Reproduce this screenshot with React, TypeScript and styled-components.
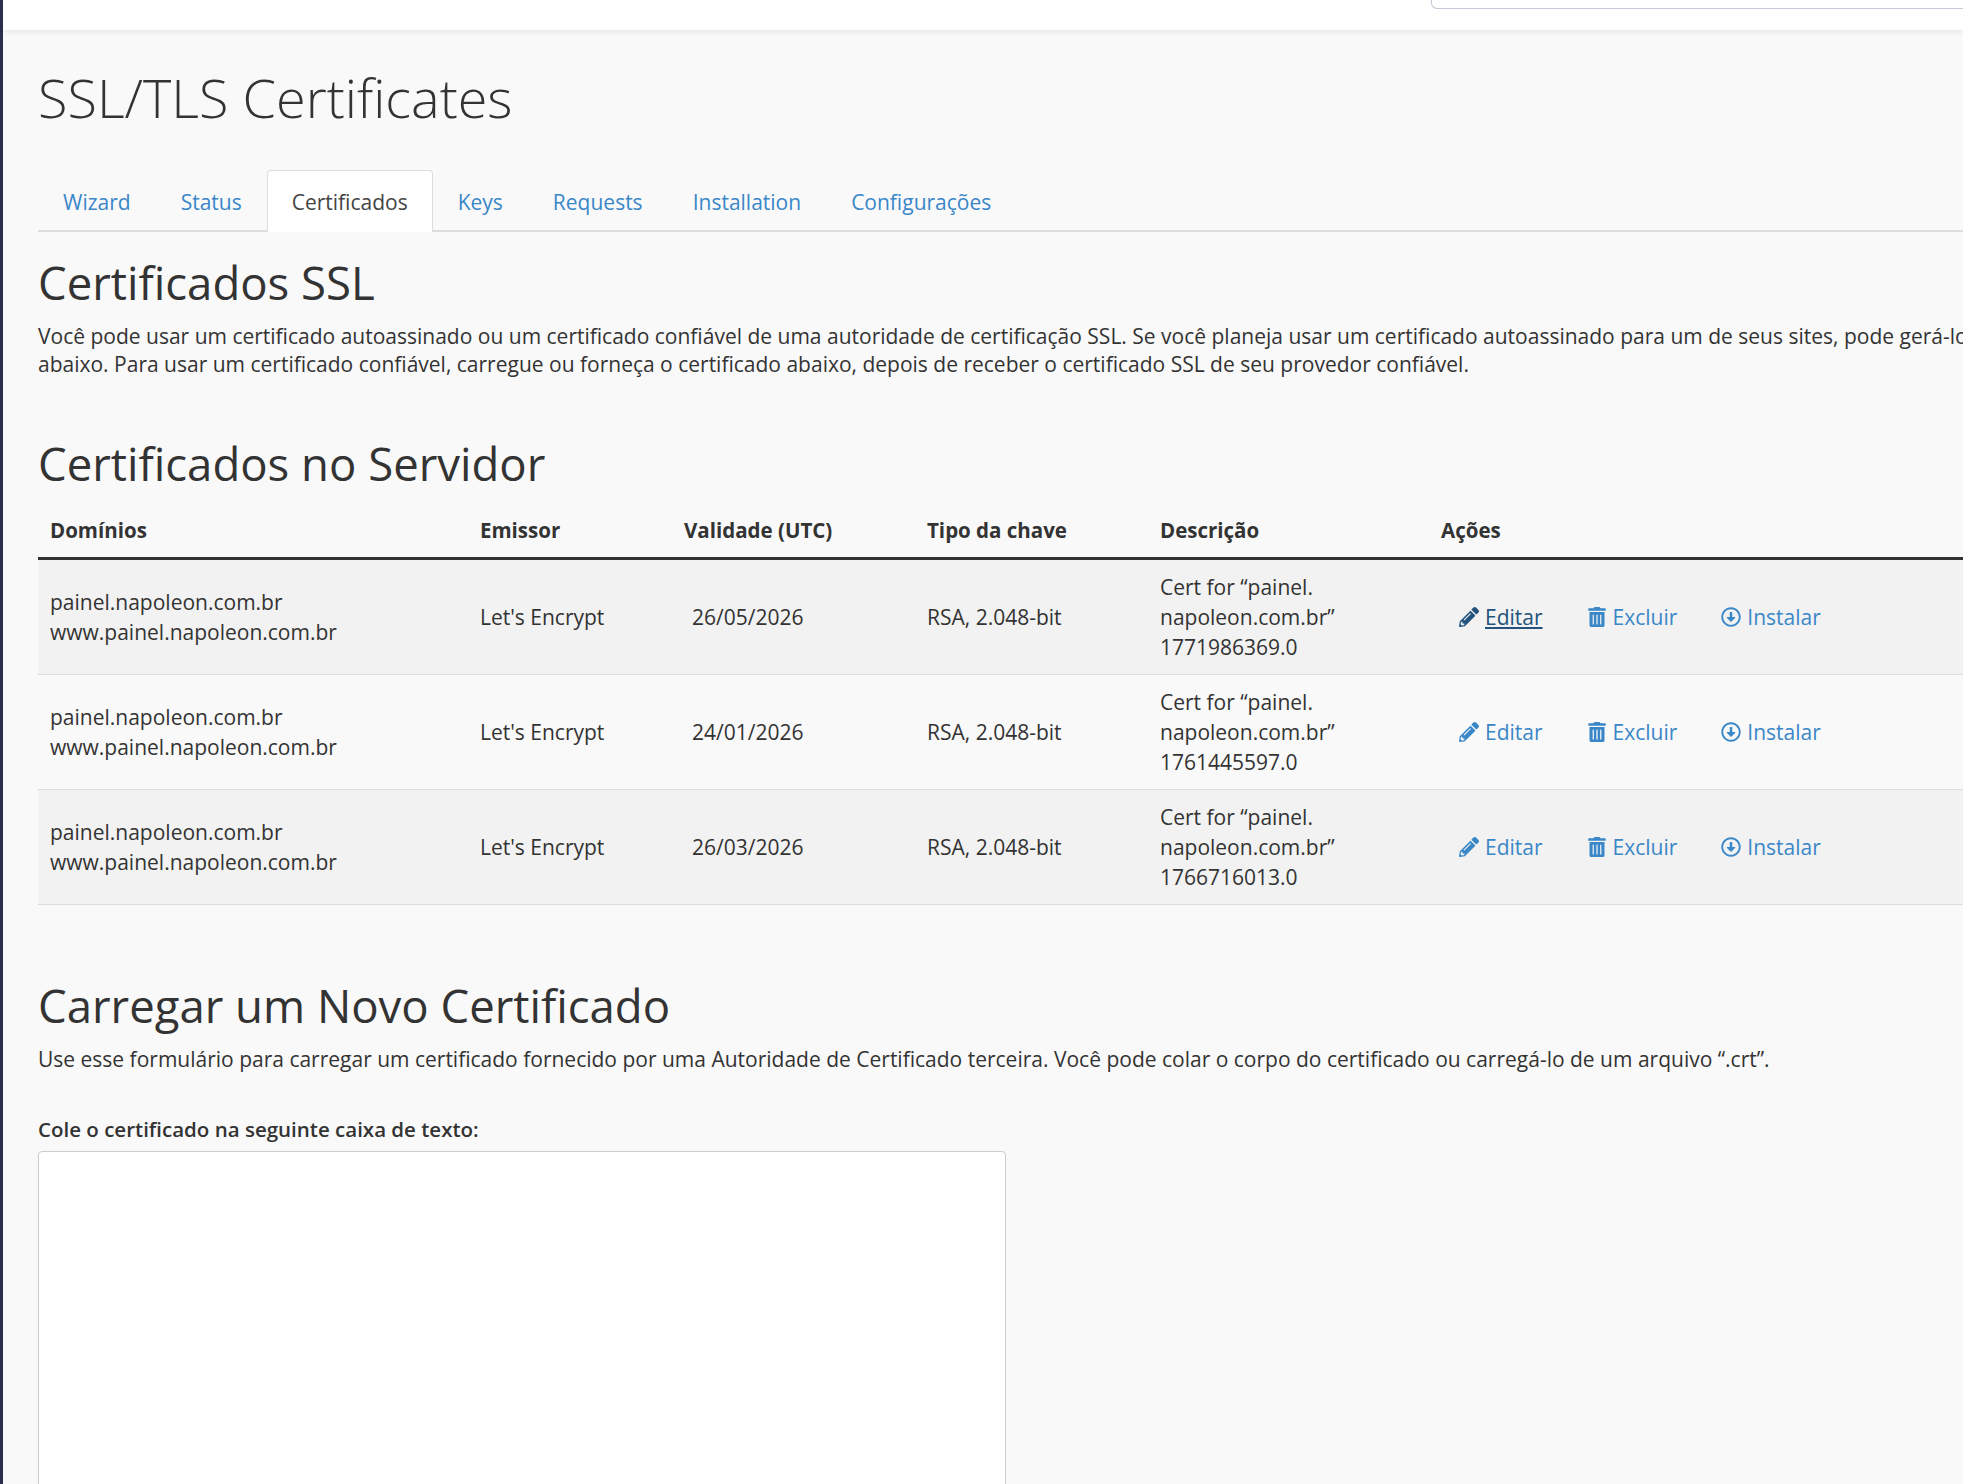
import React from 'react';
import styled, { createGlobalStyle } from 'styled-components';
import { FaPencilAlt, FaTrashAlt, FaRegArrowAltCircleDown } from 'react-icons/fa';

const GlobalStyle = createGlobalStyle`
  html, body {
    margin: 0;
    padding: 0;
    background: #f9f9f9;
    overflow: hidden;
    font-family: 'Open Sans', 'Noto Sans', sans-serif;
    color: #333;
  }
`;

const Shell = styled.div`
  width: 1963px;
  height: 1484px;
  border-left: 3px solid #2b2f4d;
  box-sizing: border-box;
  overflow: hidden;
`;

const TopBar = styled.div`
  height: 30px;
  background: #fff;
  box-shadow: 0 2px 6px rgba(0, 0, 0, 0.08);
  display: flex;
  justify-content: flex-end;
`;

const SearchBox = styled.div`
  width: 560px;
  height: 8px;
  margin-right: -30px;
  border: 1px solid #c8c8d8;
  border-top: none;
  border-radius: 0 0 0 6px;
`;

const Content = styled.div`
  padding: 0 0 0 35px;
  width: 2100px;
`;

const Title = styled.h1`
  font-size: 54px;
  font-weight: 300;
  margin: 28px 0 34px;
  line-height: 78px;
`;

const Tabs = styled.div`
  display: flex;
  border-bottom: 2px solid #ddd;
  height: 60px;
`;

const Tab = styled.div<{ $active?: boolean }>`
  font-size: 21px;
  padding: 0 24px;
  display: flex;
  align-items: center;
  color: ${(p) => (p.$active ? '#444' : '#3a87c8')};
  background: ${(p) => (p.$active ? '#fff' : 'transparent')};
  border: 1px solid ${(p) => (p.$active ? '#ddd' : 'transparent')};
  border-bottom: none;
  border-radius: 4px 4px 0 0;
  margin-bottom: -2px;
`;

const H2 = styled.h2<{ $top: number }>`
  font-size: 45.5px;
  font-weight: 500;
  margin: ${(p) => p.$top}px 0 10px;
  line-height: 60px;
`;

const Para = styled.p`
  font-size: 21px;
  line-height: 28px;
  margin: 0;
  white-space: nowrap;
`;

const Table = styled.div`
  margin-top: 2px;
  width: 2100px;
`;

const grid = `display: grid; grid-template-columns: 430px 204px 243px 233px 281px 1fr;`;

const HeadRow = styled.div`
  ${grid}
  height: 54px;
  align-items: center;
  border-bottom: 3px solid #333;
  font-weight: 700;
  font-size: 20.5px;
  padding-left: 12px;
`;

const Row = styled.div<{ $odd: boolean }>`
  ${grid}
  height: 114px;
  align-items: center;
  background: ${(p) => (p.$odd ? '#f2f2f2' : '#f9f9f9')};
  border-bottom: 1px solid #ddd;
  font-size: 21px;
  line-height: 30px;
  padding-left: 12px;
`;

const Cell = styled.div<{ $shift?: number }>`
  padding-left: ${(p) => p.$shift || 0}px;
`;

const Actions = styled.div`
  display: flex;
  gap: 44px;
  padding-left: 18px;
`;

const Action = styled.a<{ $hover?: boolean }>`
  display: flex;
  align-items: center;
  gap: 6px;
  color: ${(p) => (p.$hover ? '#23527c' : '#3a87c8')};
  font-size: 21px;
  span {
    text-decoration: ${(p) => (p.$hover ? 'underline' : 'none')};
  }
  svg {
    font-size: 20px;
  }
`;

const Label = styled.div`
  font-weight: 600;
  font-size: 20.5px;
  margin-top: 42px;
  margin-bottom: 8px;
`;

const TextArea = styled.div`
  width: 966px;
  height: 400px;
  background: #fff;
  border: 1px solid #ccc;
  border-radius: 4px;
`;

const rows = [
  { date: '26/05/2026', id: '1771986369.0' },
  { date: '24/01/2026', id: '1761445597.0' },
  { date: '26/03/2026', id: '1766716013.0' },
];

export default function App() {
  return (
    <>
      <GlobalStyle />
      <Shell>
        <TopBar>
          <SearchBox />
        </TopBar>
        <Content>
          <Title>SSL/TLS Certificates</Title>
          <Tabs>
            <Tab>Wizard</Tab>
            <Tab>Status</Tab>
            <Tab $active>Certificados</Tab>
            <Tab>Keys</Tab>
            <Tab>Requests</Tab>
            <Tab>Installation</Tab>
            <Tab>Configurações</Tab>
          </Tabs>
          <H2 $top={20}>Certificados SSL</H2>
          <Para>
            Você pode usar um certificado autoassinado ou um certificado confiável de uma autoridade de certificação SSL. Se você planeja usar um certificado autoassinado para um de seus sites, pode gerá-lo
            <br />
            abaixo. Para usar um certificado confiável, carregue ou forneça o certificado abaixo, depois de receber o certificado SSL de seu provedor confiável.
          </Para>
          <H2 $top={55}>Certificados no Servidor</H2>
          <Table>
            <HeadRow>
              <Cell>Domínios</Cell>
              <Cell>Emissor</Cell>
              <Cell>Validade (UTC)</Cell>
              <Cell>Tipo da chave</Cell>
              <Cell>Descrição</Cell>
              <Cell>Ações</Cell>
            </HeadRow>
            {rows.map((r, i) => (
              <Row key={r.id} $odd={i % 2 === 0}>
                <Cell>
                  painel.napoleon.com.br
                  <br />
                  www.painel.napoleon.com.br
                </Cell>
                <Cell>Let's Encrypt</Cell>
                <Cell $shift={8}>{r.date}</Cell>
                <Cell>RSA, 2.048-bit</Cell>
                <Cell>
                  Cert for “painel.
                  <br />
                  napoleon.com.br”
                  <br />
                  {r.id}
                </Cell>
                <Actions>
                  <Action $hover={i === 0}>
                    <FaPencilAlt />
                    <span>Editar</span>
                  </Action>
                  <Action>
                    <FaTrashAlt />
                    <span>Excluir</span>
                  </Action>
                  <Action>
                    <FaRegArrowAltCircleDown />
                    <span>Instalar</span>
                  </Action>
                </Actions>
              </Row>
            ))}
          </Table>
          <H2 $top={70}>Carregar um Novo Certificado</H2>
          <Para>
            Use esse formulário para carregar um certificado fornecido por uma Autoridade de Certificado terceira. Você pode colar o corpo do certificado ou carregá-lo de um arquivo “.crt”.
          </Para>
          <Label>Cole o certificado na seguinte caixa de texto:</Label>
          <TextArea />
        </Content>
      </Shell>
    </>
  );
}
